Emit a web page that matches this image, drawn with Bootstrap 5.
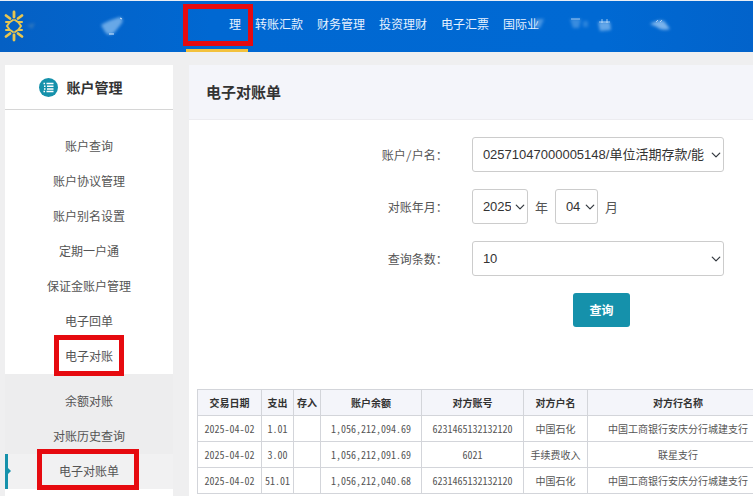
<!DOCTYPE html>
<html lang="zh-CN">
<head>
<meta charset="utf-8">
<meta name="viewport" content="width=device-width, initial-scale=1">
<title>电子对账单</title>
<link rel="stylesheet" href="https://cdn.jsdelivr.net/npm/bootstrap@5.3.0/dist/css/bootstrap.min.css">
<style>
  :root { --teal: #1591ab; --flag: #e60a0f; }
  body { font-family: "Noto Sans Mono CJK SC", "Noto Sans CJK SC", sans-serif; font-size: 12px; color: #555; background: #efeff0; overflow: hidden; }
  a { color: inherit; text-decoration: none; }

  .topbar { height: 52px; border-top: 1px solid #e9eef6; background: linear-gradient(90deg, #0560c4 0%, #0068d2 28%, #0069d3 80%, #0263cb 100%); }
  .brand-art { width: 186px; height: 51px; }
  .tab-link { width: 62px; padding: 0 7px; height: 51px; line-height: 46px; font-weight: 500; color: #e6f1ff; text-align: center; white-space: nowrap; }
  .tab-link.active { text-align: right; border-bottom: 3px solid #f3c13c; }

  /* red annotation frame laid over a link */
  .flagged { position: relative; }
  .flagged::after { content: ""; position: absolute; border: 5px solid var(--flag); pointer-events: none; }
  .tab-link.flagged::after { inset: 3px -5px 3px -3px; }
  .side-link.flagged::after { inset: -4px 49px -2px 49px; }
  .side-link.flagged.active::after { inset: -5px 34px -1px 29px; }

  .page { gap: 16px; padding: 13px 0 0 5px; min-height: calc(100vh - 52px); }
  .sidebar { flex: 0 0 168px; }
  .side-head { height: 45px; gap: 9px; font-size: 14px; font-weight: 700; color: #333; border-bottom: 1px solid #d6d6d6; padding-right: 17px; }
  .side-nav { padding-top: 19px; }
  .side-link { display: block; line-height: 33px; height: 35px; text-align: center; color: #555; }
  .side-sub { background: #ededee; padding-top: 10px; }
  .side-link.active { background: #f1f1f2; border-left: 3px solid var(--teal); padding-right: 3px; }
  .side-link.active::before { content: ""; position: absolute; left: 0; top: 14px; border: 3px solid transparent; border-left-color: var(--teal); border-right-width: 0; }

  .panel { min-width: 0; }
  .panel-title { height: 55px; padding: 0 17px; font-size: 15px; font-weight: 700; color: #333; background: #f4f5fa; border-bottom: 1px solid #ececf0; }
  .query { gap: 17px; padding: 17px 29px 0 4px; }
  .query-row { gap: 24px; }
  .query-label { flex: 0 0 48%; text-align: right; white-space: nowrap; color: #555; }
  .form-select { height: 35px; padding: 0 16px 0 10px; font-family: "Liberation Sans", "Noto Sans CJK SC", sans-serif; font-size: 13px; line-height: 33px; color: #333; border: 1px solid #ccc; border-radius: 3px; background-position: right 2px center; background-size: 10px 10px; text-overflow: clip; }
  .pick-year { width: 56px; }
  .pick-month { width: 43px; }
  .unit { font-size: 13px; padding: 0 7px; }
  .query-action { padding-left: 7px; }
  .btn-query { width: 57px; height: 34px; padding: 0; font-size: 12px; font-weight: 700; color: #fff; background: var(--teal); border: 0; border-radius: 3px; }

  .ledger-wrap { padding: 62px 0 0 8px; overflow: hidden; }
  .ledger { width: 571px; table-layout: fixed; font-size: 10px; text-align: center; border-collapse: collapse; white-space: nowrap; }
  .ledger th, .ledger td { height: 26px; padding: 0; line-height: 16px; border: 1px solid #d3d5da; vertical-align: middle; }
  .ledger th { background: #f4f5fa; font-weight: 700; color: #333; }
</style>
<script src="https://cdn.jsdelivr.net/npm/bootstrap@5.3.0/dist/js/bootstrap.bundle.min.js"></script>
</head>
<body>
<header class="topbar d-flex overflow-hidden">
  <svg class="brand-art flex-shrink-0" viewBox="0 0 186 51" aria-hidden="true">
    <defs><filter id="soft" x="-50%" y="-50%" width="200%" height="200%"><feGaussianBlur stdDeviation="1.5"/></filter></defs>
    <g stroke="#e8c650" stroke-width="2.800" stroke-linecap="round" fill="none">
      <path d="M14 11v5M14 34v5M6 14.500l4 3M22 14.500l-4 3M6 35.500l4-3M22 35.500l-4-3"/>
      <path d="M6 21h4l3-2M22 21h-4l-3-2M6 29h4l3 2M22 29h-4l-3 2M9.500 21.500L7 25l2.500 3.500M18.500 21.500L21 25l-2.500 3.500" stroke-width="2"/>
    </g>
    <path d="M27 24l8-2-3 6z" fill="#6d95b4" opacity=".4" filter="url(#soft)"/>
    <path d="M101 24q8-5 19-8 4 2 2 6l-8 10q-6 4-9-1z" fill="#79b4ec" opacity=".85" filter="url(#soft)"/>
    <path d="M120 17l2 1M109 33h5" stroke="#d7ecff" stroke-width="1"/>
  </svg>
  <nav class="d-flex" aria-label="主菜单">
    <a class="tab-link active flagged" href="#">理</a>
    <a class="tab-link" href="#">转账汇款</a>
    <a class="tab-link" href="#">财务管理</a>
    <a class="tab-link" href="#">投资理财</a>
    <a class="tab-link" href="#">电子汇票</a>
    <a class="tab-link text-start" href="#">国际业</a>
  </nav>
  <svg class="flex-shrink-0" width="160" height="51" viewBox="558 0 160 51" overflow="visible" aria-hidden="true">
    <g fill="#8fc1f1" filter="url(#soft)">
      <path d="M536 18h8l-4 9h-5z" opacity=".5"/>
      <path d="M570 18h11l-2 9h-6z" opacity=".4"/>
      <path d="M583 20h5v6h-5z" opacity=".3"/>
      <path d="M598 21h12l1 8-11 1z" opacity=".7"/>
      <path d="M650 23q8-5 14-3l6 8q-9 2-13-2z" opacity=".85"/>
    </g>
    <path d="M571 18h9M602 18v4M607 18v4M599 21h11M656 21l2-2M660 21l2-2" stroke="#d9ebfd" stroke-width="1" opacity=".7" fill="none"/>
  </svg>
</header>

<div class="page d-flex">
  <aside class="sidebar bg-white">
    <div class="side-head d-flex align-items-center justify-content-center">
      <svg width="19" height="19" viewBox="0 0 19 19" aria-hidden="true">
        <circle cx="9.500" cy="9.500" r="9.500" fill="#1591ab"/>
        <path d="M4.500 5.500h1.500M7.500 5.500h7M5 8.200h1.500M8 8.200h6.500M5 10.900h1.500M8 10.900h6.500M4.500 13.600h1.500M7.500 13.600h7" stroke="#fff" stroke-width="1.500"/>
      </svg>
      <span>账户管理</span>
    </div>
    <nav class="side-nav" aria-label="账户管理">
      <a class="side-link" href="#">账户查询</a>
      <a class="side-link" href="#">账户协议管理</a>
      <a class="side-link" href="#">账户别名设置</a>
      <a class="side-link" href="#">定期一户通</a>
      <a class="side-link" href="#">保证金账户管理</a>
      <a class="side-link" href="#">电子回单</a>
      <a class="side-link flagged" href="#">电子对账</a>
      <div class="side-sub">
        <a class="side-link" href="#">余额对账</a>
        <a class="side-link" href="#">对账历史查询</a>
        <a class="side-link flagged active" href="#">电子对账单</a>
      </div>
    </nav>
  </aside>

  <main class="panel bg-white flex-grow-1">
    <h1 class="panel-title d-flex align-items-center m-0">电子对账单</h1>
    <form class="query d-flex flex-column">
      <div class="query-row d-flex align-items-center">
        <label class="query-label" for="account">账户/户名：</label>
        <select class="form-select" id="account"><option>02571047000005148/单位活期存款/能</option></select>
      </div>
      <div class="query-row d-flex align-items-center">
        <label class="query-label" for="year">对账年月：</label>
        <div class="d-flex align-items-center">
          <select class="form-select pick-year" id="year"><option>2025</option></select>
          <label class="unit" for="year">年</label>
          <select class="form-select pick-month" id="month"><option>04</option></select>
          <label class="unit" for="month">月</label>
        </div>
      </div>
      <div class="query-row d-flex align-items-center">
        <label class="query-label" for="count">查询条数：</label>
        <select class="form-select" id="count"><option>10</option></select>
      </div>
      <div class="query-row d-flex">
        <span class="query-label"></span>
        <div class="query-action flex-grow-1 text-center"><button class="btn btn-query" type="button">查询</button></div>
      </div>
    </form>
    <div class="ledger-wrap">
      <table class="ledger">
        <colgroup><col style="width:64px"><col style="width:32px"><col style="width:27px"><col style="width:101px"><col style="width:102px"><col style="width:64px"><col style="width:181px"></colgroup>
        <thead>
          <tr><th>交易日期</th><th>支出</th><th>存入</th><th>账户余额</th><th>对方账号</th><th>对方户名</th><th>对方行名称</th></tr>
        </thead>
        <tbody>
          <tr><td>2025-04-02</td><td>1.01</td><td></td><td>1,056,212,094.69</td><td>6231465132132120</td><td>中国石化</td><td>中国工商银行安庆分行城建支行</td></tr>
          <tr><td>2025-04-02</td><td>3.00</td><td></td><td>1,056,212,091.69</td><td>6021</td><td>手续费收入</td><td>联星支行</td></tr>
          <tr><td>2025-04-02</td><td>51.01</td><td></td><td>1,056,212,040.68</td><td>6231465132132120</td><td>中国石化</td><td>中国工商银行安庆分行城建支行</td></tr>
        </tbody>
      </table>
    </div>
  </main>
</div>
</body>
</html>
